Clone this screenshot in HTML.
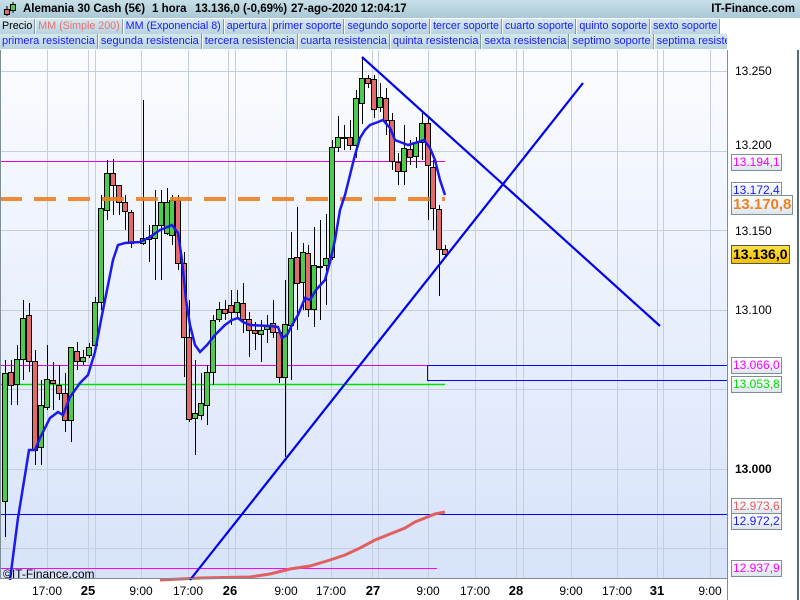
<!DOCTYPE html>
<html><head><meta charset="utf-8"><style>
*{margin:0;padding:0}
body{width:800px;height:600px;overflow:hidden;background:#fff;font-family:"Liberation Sans",sans-serif;position:relative}
#hdr{position:absolute;left:0;top:0;width:800px;height:18px;background:linear-gradient(#c8dfe8,#a9c9d6);font-size:11.5px;line-height:18px;color:#000}
#hdr b{position:absolute;top:0}
.leg{position:absolute;left:0;height:16px;font-size:11px;line-height:15px;white-space:nowrap;overflow:hidden;width:727px}
.leg span{display:inline-block;background:linear-gradient(#d6e8ef,#b8d3df);border-right:1px solid #7f9aa6;padding:0 2px 0 2px;color:#1a1aff;height:15px;margin-right:1px}
.lbl{position:absolute;left:731px;height:15px;font-size:12px;line-height:15px;border:1px solid #7e8d96;background:linear-gradient(#fff,#dde6ee);padding:0 1px}
.ax{position:absolute;left:735px;font-size:12px;line-height:14px}
.bt{position:absolute;top:584px;font-size:12px;line-height:14px;transform:translateX(-50%)}
</style></head><body>
<div id="hdr"><svg style="position:absolute;left:3px;top:2px" width="14" height="15"><line x1="4" y1="4" x2="4" y2="14" stroke="#000"/><rect x="1.5" y="7.5" width="5" height="5" fill="#e26a6a" stroke="#000"/><line x1="10" y1="0" x2="10" y2="11" stroke="#000"/><rect x="7.5" y="2.5" width="5" height="6" fill="#4ccb4c" stroke="#000"/></svg>
<b style="left:23px">Alemania 30 Cash (5€)</b><b style="left:152px">1 hora</b><b style="left:195px">13.136,0 (-0,69%)</b><b style="left:291px">27-ago-2020 12:04:17</b>
<b style="right:5px">IT-Finance.com</b></div>
<div class="leg" style="top:19px;left:0;font-size:10.7px"><span style="color:#000">Precio</span><span style="color:#e87070">MM (Simple 200)</span><span>MM (Exponencial 8)</span><span>apertura</span><span>primer soporte</span><span>segundo soporte</span><span>tercer soporte</span><span>cuarto soporte</span><span>quinto soporte</span><span>sexto soporte</span></div>
<div class="leg" style="top:34px;left:0"><span>primera resistencia</span><span>segunda resistencia</span><span>tercera resistencia</span><span>cuarta resistencia</span><span>quinta resistencia</span><span>sexta resistencia</span><span>septimo soporte</span><span>septima resistencia</span></div>
<svg id="ch" style="position:absolute;left:0;top:50px" width="800" height="550" viewBox="0 50 800 550">
<defs><linearGradient id="bg" x1="0" y1="0" x2="0" y2="1"><stop offset="0" stop-color="#fbfcff"/><stop offset="1" stop-color="#d7e3fa"/></linearGradient></defs>
<rect x="0" y="50" width="727" height="528" fill="url(#bg)"/>
<g id="grid" stroke="#c5cedd" stroke-width="1"></g>
<g id="c"></g>
</svg>
<div style="position:absolute;left:727px;top:50px;width:1px;height:550px;background:#7e8d96"></div>
<div style="position:absolute;left:0;top:578px;width:727px;height:1px;background:#7e8d96"></div>
<div style="position:absolute;left:797px;top:50px;width:2px;height:550px;background:#5a6a72"></div>
<div style="position:absolute;left:0;top:50px;width:1px;height:528px;background:#7e8d96"></div>
<div class="ax" style="top:64px">13.250</div>
<div class="ax" style="top:224px">13.150</div>
<div class="ax" style="top:303px">13.100</div>
<div class="ax" style="top:382px">13.050</div>
<div class="ax" style="top:462px;font-weight:bold">13.000</div>
<div class="ax" style="top:138px">13.200</div>
<div class="lbl" style="top:154px;color:#f0f">13.194,1</div>
<div class="lbl" style="top:182px;color:#1a1aff">13.172,4</div>
<div class="lbl" style="top:195px;color:#f08020;font-size:15px;font-weight:bold;height:18px;line-height:18px">13.170,8</div>
<div class="lbl" style="top:245px;background:linear-gradient(#ffe04a,#f5c000);font-size:14px;font-weight:bold;height:17px;line-height:17px;border-color:#555">13.136,0</div>
<div class="lbl" style="top:357px;color:#f0f">13.066,0</div>
<div class="lbl" style="top:376px;color:#0d0">13.053,8</div>
<div class="lbl" style="top:498px;color:#e06060">12.973,6</div>
<div class="lbl" style="top:513px;color:#1a1aff">12.972,2</div>
<div class="lbl" style="top:560px;color:#f0f">12.937,9</div>
<div style="position:absolute;left:3px;top:568px;font-size:12px;line-height:12px">©IT-Finance.com</div>
<div class="bt" style="left:47px">17:00</div><div class="bt" style="left:88px;font-weight:bold;font-size:13px">25</div>
<div class="bt" style="left:141px">9:00</div><div class="bt" style="left:188px">17:00</div><div class="bt" style="left:230px;font-weight:bold;font-size:13px">26</div>
<div class="bt" style="left:286px">9:00</div><div class="bt" style="left:331px">17:00</div><div class="bt" style="left:373px;font-weight:bold;font-size:13px">27</div>
<div class="bt" style="left:428px">9:00</div><div class="bt" style="left:475px">17:00</div><div class="bt" style="left:516px;font-weight:bold;font-size:13px">28</div>
<div class="bt" style="left:571px">9:00</div><div class="bt" style="left:617px">17:00</div><div class="bt" style="left:657px;font-weight:bold;font-size:13px">31</div>
<div class="bt" style="left:710px">9:00</div>
<script>
var NS="http://www.w3.org/2000/svg";
function el(p,t,a){var e=document.createElementNS(NS,t);for(var k in a)e.setAttribute(k,a[k]);p.appendChild(e);return e;}
var g=document.getElementById('grid'),c=document.getElementById('c');
[71,151,230,310,389,469,548].forEach(function(y){el(g,'line',{x1:0,x2:727,y1:y+.5,y2:y+.5});});
[47,88,95,141,188,228,235,286,331,372,378,428,475,516,523,571,617,657,663,710].forEach(function(x){el(g,'line',{x1:x+.5,x2:x+.5,y1:50,y2:578});});
var C=[[5,373,501,360,537,1],[11,372,385,360,405,0],[17,359,384,345,405,1],[23,318,359,300,380,1],[29,315,361,303,372,0],[35,361,450,350,465,0],[41,405,447,380,465,1],[47,379,407,345,410,1],[53,380,383,362,410,0],[59,385,393,365,400,0],[65,393,420,373,432,0],[71,347,420,347,442,1],[77,351,361,342,370,0],[83,357,361,350,365,1],[89,347,355,343,358,1],[95,302,345,297,350,1],[101,208,302,195,310,1],[107,173,210,160,220,1],[113,173,185,159,215,0],[119,185,202,185,215,0],[125,202,211,195,230,0],[131,212,243,210,248,0],[143,238,243,100,245,1],[149,237,239,225,262,0],[155,225,238,190,280,1],[161,202,225,190,280,1],[167,202,233,188,235,1],[172,200,235,195,245,1],[178,200,263,195,270,0],[184,263,337,252,377,0],[189,337,419,300,422,0],[195,413,418,360,455,1],[201,403,415,373,420,1],[207,372,405,365,425,1],[213,320,372,315,385,1],[219,309,319,302,322,1],[225,309,313,300,320,0],[231,305,312,290,325,0],[237,302,312,290,318,1],[243,303,319,283,333,0],[249,319,330,312,357,0],[255,330,333,322,350,0],[261,330,334,320,362,1],[267,325,329,315,343,1],[273,323,332,300,338,0],[279,332,377,330,383,0],[285,324,377,280,457,1],[291,258,325,232,380,1],[297,257,283,207,330,0],[303,252,282,243,310,1],[308,253,309,245,317,0],[314,265,309,227,327,1],[320,266,267,220,320,0],[326,258,265,214,305,1],[332,147,257,140,260,1],[338,137,147,116,152,1],[344,137,138,125,150,0],[350,137,145,120,150,0],[356,98,145,90,158,1],[362,78,103,57,124,1],[368,78,83,75,88,0],[374,79,109,75,118,0],[380,97,107,83,112,1],[386,98,120,88,135,0],[392,120,161,113,170,0],[398,162,171,153,185,0],[404,148,171,125,185,1],[410,149,157,140,165,0],[416,142,156,137,168,1],[422,123,142,113,160,1],[428,123,165,117,220,0],[433,167,208,160,230,0],[439,209,249,205,296,0],[445,249,254,245,258,0]];
el(c,'line',{x1:0,x2:445,y1:161.5,y2:161.5,stroke:'#e000e0','stroke-width':1});
el(c,'line',{x1:0,x2:727,y1:365.5,y2:365.5,stroke:'#e000e0','stroke-width':1});
el(c,'line',{x1:0,x2:445,y1:384.5,y2:384.5,stroke:'#00e000','stroke-width':1.5});
el(c,'line',{x1:0,x2:727,y1:514.5,y2:514.5,stroke:'#0000ff','stroke-width':1});
el(c,'line',{x1:0,x2:437,y1:568.5,y2:568.5,stroke:'#ff00ff','stroke-width':1});
el(c,'polyline',{points:'727,365.5 427.5,365.5 427.5,380.5 727,380.5',fill:'none',stroke:'#0000ff','stroke-width':1});
C.forEach(function(d){var x=d[0];
el(c,'line',{x1:x+.5,x2:x+.5,y1:d[3],y2:d[4],stroke:'#000','stroke-width':1});
el(c,'rect',{x:x-2.5,y:d[1]+.5,width:5,height:Math.max(1,d[2]-d[1]),fill:d[5]?'#4ccb4c':'#e26a6a',stroke:'#000','stroke-width':1});});
el(c,'line',{x1:0,x2:445,y1:199,y2:199,stroke:'#f08020','stroke-width':4,'stroke-dasharray':'22,12',opacity:.9});
el(c,'polyline',{points:'160,580 200,578 250,577 270,574 290,569 310,566 330,560 345,555 360,548 375,540 390,534 405,528 415,522 425,518 435,514 445,512',fill:'none',stroke:'#e06060','stroke-width':3});
el(c,'polyline',{points:'10,580 18,518 25,475 29,450 35,450 40,438 50,418 58,412 63,415 70,397 80,383 88,375 95,352 101,320 107,290 113,260 118,245 125,243 140,242 150,237 160,230 165,228 172,225 178,233 182,260 186,300 190,325 195,345 200,352 207,345 215,335 225,325 232,320 238,318 243,322 250,325 270,326 278,327 282,338 287,335 292,325 298,315 305,298 310,300 316,290 325,280 330,262 335,240 340,210 345,195 350,175 355,155 360,138 365,130 370,125 378,122 383,120 390,128 395,140 400,142 408,145 415,143 424,140 430,148 435,160 440,180 445,195',fill:'none',stroke:'#1a1aee','stroke-width':2.5});
el(c,'line',{x1:362,y1:57,x2:660,y2:326,stroke:'#0000ee','stroke-width':2.2});
el(c,'line',{x1:190,y1:580,x2:583,y2:83,stroke:'#0000ee','stroke-width':2.2});
</script>
</body></html>
